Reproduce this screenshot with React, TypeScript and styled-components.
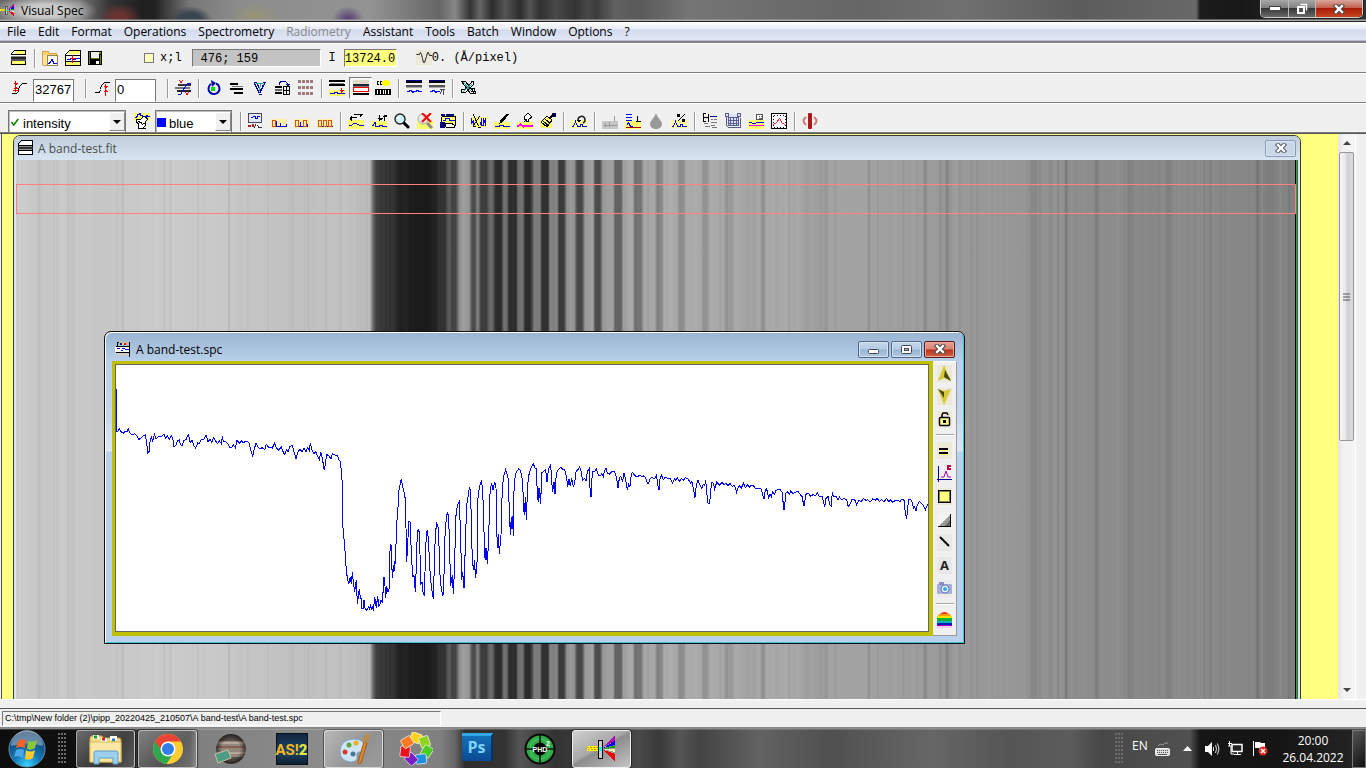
import React from 'react';
import styled, { createGlobalStyle, css } from 'styled-components';

const Global = createGlobalStyle`
  *, *::before, *::after { box-sizing: border-box; }
  html, body { margin: 0; padding: 0; }
  body { background: #f0f0f0; font-family: "Open Sans", "Noto Sans", sans-serif; font-size: 12px; color: #000; overflow: hidden; }
  button, input, select { font: inherit; color: inherit; margin: 0; }
  svg { display: block; flex: none; }
`;

/* ---------- shared icon primitives ---------- */

const PALE = '#ffff6c';

type LineProps = { d: string; c?: string; w?: number };
const Line = ({ d, c = '#000', w = 1 }: LineProps) => (
  <path d={d} fill="none" stroke={c} strokeWidth={w} transform="translate(.5 .5)" />
);
type BoxProps = { x: number; y: number; w: number; h: number; c?: string };
const Box = ({ x, y, w, h, c = '#000' }: BoxProps) => <rect x={x} y={y} width={w} height={h} fill={c} />;
const Tint = ({ x = 0, y = 9, w = 16, h = 7 }: { x?: number; y?: number; w?: number; h?: number }) => (
  <Box x={x} y={y} w={w} h={h} c={PALE} />
);
const Wave = ({ c = '#00f', y = 12 }: { c?: string; y?: number }) => (
  <Line c={c} d={`M0 ${y + 1}h2v-1h1v-2h2v-1h1v2h2v2h2v-1h2v-1h1v1h2`} />
);

const glyphs: Record<string, React.ReactNode> = {
  film: (<>
    <path d="M4 0h11v4H0V3z" fill="#fff" /><Box x={4} y={1} w={10} h={3} c={PALE} />
    <Line d="M3 0h11v14M3 0l-3 3v2M0 4h14M0 9v5h14" />
    <Box x={0} y={5} w={15} h={1} c="#fff" /><Box x={0} y={6} w={15} h={1} c="#888" /><Box x={0} y={7} w={15} h={2} c="#222" />
    <Box x={0} y={9} w={15} h={2} c="#555" /><Box x={1} y={11} w={13} h={3} c={PALE} />
  </>),
  fitFile: (<>
    <path d="M4 1h10v4H1V4z" fill="#fff" /><Line d="M3 0h11v14h-14v-11zM0 5h14" />
    <Box x={1} y={6} w={13} h={1} c="#888" /><Box x={0} y={7} w={15} h={2} c="#333" /><Box x={1} y={9} w={13} h={1} c="#999" /><Box x={1} y={10} w={13} h={1} /><Box x={1} y={11} w={13} h={3} c="#fff" />
  </>),
  folder: (<>
    <path d="M0 3l1-2h5l1 2h7v12H1z" fill="#f6cf73" stroke="#d6a03c" strokeWidth="1" />
    <Box x={1} y={5} w={4} h={10} c="#fae3a0" />
    <Box x={5} y={6} w={11} h={10} c="#fff" /><Line c="#9a8448" d="M5 5h10v10h-10z" />
    <Line c="#00f" d="M6 13l2-1l1-3h1l1 4h3" />
  </>),
  openSpectrum: (<>
    <Box x={1} y={0} w={14} h={15} c="#fff" /><Box x={3} y={1} w={12} h={3} c={PALE} />
    <Box x={1} y={11} w={14} h={4} c={PALE} />
    <Line d="M4 0h11v15h-15v-11zM0 5h15M0 11h15" /><Line c="#00f" d="M1 9h4v-1h3v1h2v-1h4" /><Line c="#f00" d="M7 4v8M5 8h5" />
  </>),
  save: (<>
    <Box x={0} y={1} w={14} h={14} /><Box x={3} y={2} w={8} h={6} c="#f0f0f0" /><Box x={11} y={2} w={2} h={2} c="#8a8a20" />
    <Box x={1} y={2} w={1} h={12} c="#7c7c00" /><Box x={12} y={5} w={1} h={9} c="#7c7c00" /><Box x={3} y={8} w={8} h={1} c="#7c7c00" /><Box x={8} y={11} w={3} h={3} c="#fff" />
  </>),
  dispersion: (<>
    <Box x={0} y={0} w={16} h={15} c="#ece9d8" /><g shapeRendering="auto"><Line c="#222" d="M0 4h3l1-2l1 2l1 4l1 4h1l2-6l1-4h1l1 3h3" /></g>
  </>),
  high: (<>
    <Line d="M0 13h5l2-2v-3l2-3l2-2h5" /><Line c="#f00" d="M4 0v11M2 3h4M3 4h2M2 8h4M3 7h2M1 10h6" />
  </>),
  low: (<>
    <Line d="M0 12h5l1-3l1-4l3-3h5" /><Line c="#f00" d="M11 3v12M9 6h4M10 7h2M9 11h4M10 10h2" />
  </>),
  threshold: (<>
    <Box x={3} y={4} w={13} h={2} c="#333" /><Box x={0} y={7} w={15} h={2} c="#777" /><Box x={2} y={10} w={14} h={2} c="#222" />
    <Line c="#00f" d="M2 14h3l2-3l2-4l3-4h4" /><Line c="#f00" d="M4 0l3 3M7 0l-3 3M10 12l3 3M13 12l-3 3" />
  </>),
  rotate: (<>
    <g shapeRendering="auto"><path d="M10 3.500a5.500 5.500 0 1 1-5 .5" fill="none" stroke="#0000b0" strokeWidth="2" /><path d="M5 0l5 3-4 4z" fill="#0000b0" /></g>
    <Box x={5} y={7} w={4} h={4} c="#00e000" />
  </>),
  lines: (<><Box x={1} y={3} w={8} h={2} /><Box x={3} y={6} w={11} h={1} c="#777" /><Box x={1} y={8} w={13} h={2} /><Box x={5} y={12} w={9} h={2} /></>),
  vee: (<><Line c="#0000a0" d="M1 2h3M10 2h3M2 3l5 10M12 3l-5 10M5 4l3 6" /><Line c="#2b9a9a" d="M3 3h7l2 2M8 3l-1 8" /><Line c="#0000a0" d="M6 14h3M10 4v2" /></>),
  copyPanels: (<>
    <Line c="#0000a0" d="M4 4v-2l2-1h4l2 2v1M10 4h4M11 5h2" />
    <Box x={0} y={6} w={7} h={2} /><Box x={0} y={9} w={7} h={2} c="#666" /><Box x={0} y={12} w={7} h={2} />
    <Line d="M8 6h6v8h-6zM8 10h6M11 6v8" />
  </>),
  grid: (<>{[0, 6, 12].map(y => [0, 4, 8, 12].map(x => <Box key={`${x}-${y}`} x={x} y={y} w={3} h={3} c="#a07a78" />))}</>),
  stripDown: (<>
    <Box x={0} y={0} w={16} h={2} /><Box x={1} y={2} w={14} h={1} c="#fff" /><Box x={1} y={3} w={14} h={1} c="#888" /><Box x={0} y={4} w={16} h={2} />
    <Tint y={10} h={6} /><Line c="#00f" d="M0 13h5v-1h3v1h7" /><Line c="#f00" d="M12 7v6M10 10h4M11 11h2" />
  </>),
  zone: (<>
    <Box x={0} y={0} w={16} h={4} c="#ded9c8" /><Box x={0} y={4} w={16} h={2} c="#223" /><Box x={0} y={6} w={16} h={1} c="#777" />
    <Box x={0} y={7} w={16} h={5} c="#f00" /><Box x={1} y={8} w={14} h={3} c="#fff" /><Box x={0} y={13} w={16} h={2} />
  </>),
  lamp: (<>
    <ellipse cx="11" cy="3" rx="4" ry="3" fill="#ff0" /><Line d="M3 1h-1v3h1M6 1h-1v3h1" />
    <Box x={0} y={9} w={16} h={6} />{[2, 5, 8, 10, 13].map(x => <Box key={x} x={x} y={10} w={1} h={4} c="#fff" />)}
  </>),
  strip: (<><Box x={0} y={0} w={16} h={3} /><Box x={0} y={0} w={16} h={1} c="#000080" /><Box x={0} y={5} w={16} h={2} c="#555" /><Box x={0} y={7} w={16} h={1} c="#aaa" /><Line c="#00f" d="M0 11h3v-1h2v1h1v1h1v-1h3v-1h2v1h4" /></>),
  stripX: (<><Box x={0} y={0} w={16} h={3} /><Box x={0} y={0} w={16} h={1} c="#000080" /><Box x={0} y={5} w={16} h={2} c="#555" /><Box x={0} y={7} w={16} h={1} c="#aaa" /><Line c="#00f" d="M0 11h3v-1h2v1h1v1h1v-1h3" /><Line c="#446" d="M10 9h5M11 14l1-5M14 9v5" /></>),
  plug: (<>
    <Line d="M0 1h5l8 10h2v2h-5L1 1M5 1l9 12M10 1h3v3l-8 8h-4v-3h3l8-8M1 12h4" /><Line c="#2aa" d="M3 2l8 9M12 3l-9 8" /><Line d="M9 8h5v3h-4" />
  </>),
  pen: (<>
    <Tint y={0} h={8} /><Wave y={3} /><path d="M2 6h5l3-3 4 3-3 3 1 3-4 4-4-1 1-4-3-2z" fill="#fff" stroke="#000" /><Line d="M4 8l4 2M8 11l3-2M8 15l3 0" />
  </>),
  board: (<>
    <Box x={1} y={1} w={13} h={9} c="#e4e8f8" /><Line c="#446" d="M0 0h13v9h-13z" /><Line c="#00f" d="M2 4h2l1-1h2v2h2v-2h2" />
    <Line c="#334" d="M7 10v2M5 15l2-3M9 12l2 3M10 14h3" /><Box x={0} y={12} w={3} h={2} c="#a22" /><Box x={4} y={11} w={2} h={3} c="#a22" />
  </>),
  peak1: (<><Box x={0} y={6} w={16} h={9} c="#fbf0a4" /><Line c="#00f" d="M1 13h4v-6M5 13h4v-4M9 13h6v-3" /><Line c="#d4501a" d="M1 7h3v6h-3z" /></>),
  peak2: (<><Box x={0} y={6} w={16} h={9} c="#fbf0a4" /><Line c="#00f" d="M1 13h5v-5M5 13h8v-3" /><Line c="#d4501a" d="M1 7h3v6h-3zM9 7h3v6h-3z" /></>),
  peak3: (<><Box x={0} y={6} w={16} h={9} c="#fbf0a4" /><Line c="#00f" d="M1 13h15" /><Line c="#d4501a" d="M1 7h3v6h-3zM6 7h3v6h-3zM11 7h3v6h-3z" /></>),
  shiftX: (<><Tint y={7} h={9} /><Line d="M1 4h7M2 3v3M3 2v5M5 1h9M12 0v3M13 0v2" /><Line c="#00f" d="M0 12h3l2-2h3l3 2h5" /></>),
  shiftY: (<><Tint y={8} h={8} /><Line d="M8 1v6M6 5h5M7 6h3M13 1v6M11 3h4M12 2h3" /><Line c="#00f" d="M0 12h2l1-3h1v4h4v-1h3v1h5" /></>),
  magnify: (<><g shapeRendering="auto"><path d="M9 9l5 5" stroke="#000" strokeWidth="3" strokeLinecap="round" /><circle cx="6" cy="6" r="5" fill="#cdf4f6" stroke="#222" strokeWidth="1.400" /></g><Box x={4} y={4} w={2} h={2} c="#fff" /></>),
  zoomOff: (<><Tint y={8} h={8} /><g shapeRendering="auto"><circle cx="6" cy="6" r="5" fill="#e7e7e7" stroke="#aaa" /><path d="M10 10l5 5" stroke="#888" strokeWidth="3" /><path d="M5 0l9 9M14 0l-9 9" stroke="#f00" strokeWidth="2" /></g></>),
  diskWave: (<><Box x={1} y={2} w={14} h={11} c={PALE} /><Line d="M1 3h14v9h-4M1 3v6" /><Box x={1} y={1} w={4} h={2} c="#000080" /><Box x={6} y={1} w={8} h={2} c="#000080" /><Line c="#00f" d="M2 7h3v-2h4v2h5" /><Box x={0} y={9} w={5} h={6} c="#000080" /><path d="M5 10h6l3 2v2H6z" fill="#fff" stroke="#000" /></>),
  cutWave: (<><Tint y={4} h={10} /><Line c="#00f" d="M0 4v6l2-3v5M9 12l1-7v7h2v-8M12 11l2-6v7" /><Line d="M2 1l5 12M8 3l-6 9M1 13h3M6 14h3" /></>),
  brush: (<><Tint /><Line c="#00f" d="M0 13h5v-1h4v1h6" /><path d="M5 11l2-5 5-5h3l-6 8z" /></>),
  pin: (<><Tint /><Line c="#f0f" w={2} d="M0 13l3-2l3 2l4-1h6" /><path d="M8 3l3-3 4 4-3 2-1 3-4-3z" fill="#fff" stroke="#000" /><Line d="M9 6l-3 3" /></>),
  sweep: (<><Tint x={0} y={7} w={12} h={8} /><path d="M1 9l6-6 5 4-5 7z" fill="#ff6" stroke="#000" /><Line d="M3 8l5 4M5 6l5 4M6 13l1-2" /><Box x={12} y={0} w={4} h={4} c="#000060" /><Line w={2} d="M9 5l4-4" /></>),
  undo: (<><Box x={0} y={7} w={16} h={8} c="#ffff98" /><Line c="#00f" d="M0 13h2l2-5l2 5h3v-2h2v2h5" /><g shapeRendering="auto"><path d="M7 7a3.500 3.500 0 1 1 5 3" fill="none" stroke="#222" strokeWidth="1.500" /></g><Line d="M5 7h4M6 8h2" /></>),
  greyStrip: (<><Box x={0} y={8} w={16} h={8} c="#c6c6c6" /><Line c="#999" d="M1 12h13M12 2v5M11 3h1M3 9v4M7 8v5" /></>),
  orderOne: (<><Tint y={8} h={8} /><Line c="#00f" d="M0 1h6M0 4h6M0 7h6M1 12l2-3l2 4h2" /><Line c="#a00" d="M0 14h15" /><Line d="M12 2v6M11 3h1M10 8h5" /></>),
  drop: (<path shapeRendering="auto" d="M8 0C7 4 2 8 2 11c0 3 3 5 6 5s6-2 6-5C14 8 9 4 8 0z" fill="#999" />),
  percent: (<><Box x={0} y={7} w={16} h={8} c="#ffff98" /><Line c="#00f" d="M0 13h2l2-5l2 5h3v-2h2v2h5" /><Line d="M6 8l7-7" /><Box x={6} y={1} w={3} h={3} /><Box x={11} y={6} w={3} h={3} /></>),
  header: (<><Line d="M1 0v8M6 0v8M1 4h5M0 0h3M0 8h3" /><Line c="#0000a0" d="M7 3h7" /><Line c="#777" d="M8 6h2M11 6h3M8 9h6M8 12h4M1 10h4M2 13h5M9 14h5" /></>),
  table: (<><Box x={1} y={1} w={14} h={12} c="#dfe2ff" /><Line c="#55608c" d="M0 0h3v3h-3zM12 0h3v3h-3zM1 3v9l2 2h12v-10M3 4h10v8h-10zM3 7h10M3 10h10M5 4v8M8 4v8M11 4v8" /></>),
  printWave: (<><Tint y={7} h={9} /><Box x={9} y={1} w={6} h={6} c="#fff" /><Line c="#555" d="M8 1h6v5h-6zM10 3h1M12 3h1M10 5h3" /><Line c="#00f" d="M0 9h3l1 1h3l1-1h7" /><Line c="#f0f" d="M0 12h15" /></>),
  graph: (<><Box x={0} y={0} w={16} h={16} c="#fff" /><Line d="M0 0h15v15h-15zM3 1v1M6 1v1M9 1v1M12 1v1M3 13v2M6 13v2M9 13v2M12 13v2M1 3h1M1 6h1M1 9h1M1 12h1M13 3h2M13 6h2M13 9h2M13 12h2" /><Line c="#f33" d="M2 11l3-2l3-4l3 5l3 1" /></>),
  gate: (<><g shapeRendering="auto"><rect x="6" y="0" width="4" height="16" rx="1" fill="#b01818" /><path d="M4 4Q-1 8 4 12" fill="none" stroke="#c77" strokeWidth="2" /><path d="M12 4Q17 8 12 12" fill="none" stroke="#c77" strokeWidth="2" /></g></>),
  check: (<g shapeRendering="auto"><path d="M2 8l3 4 6-8" fill="none" stroke="#008000" strokeWidth="2" /></g>),
};

const Glyph = ({ name, size = 16 }: { name: string; size?: number }) => (
  <svg width={size} height={size} viewBox="0 0 16 16" shapeRendering="crispEdges" aria-hidden="true">{glyphs[name]}</svg>
);

const Prism = ({ size }: { size: number }) => (
  <svg width={size} height={size} viewBox="0 0 32 32" shapeRendering="crispEdges" aria-hidden="true">
    <rect x="1" y="13" width="11" height="5" fill="#ff0" /><path d="M1 14h11M2 16h10" stroke="#e08a20" strokeDasharray="2 1" />
    <path d="M17 14L29 3v5z" fill="#b000b0" /><path d="M17 15L29 8v4z" fill="#00f" /><path d="M17 16l12-4v3z" fill="#00a000" /><path d="M17 16h12v3z" fill="#fff8b0" /><path d="M17 17l12 4v7z" fill="#e00" />
    <rect x="12.500" y="7.500" width="4" height="18" fill="#ccc" stroke="#000" /><rect x="13" y="14" width="3" height="4" fill="#0ff" />
  </svg>
);

/* ---------- application frame ---------- */

const Screen = styled.div`display: flex; flex-direction: column; height: 100vh; min-height: 600px;`;

const TitleBar = styled.header`
  display: flex; height: 22px; flex: none; border-bottom: 1px solid #222; padding: 0 3px 0 0;
  background:
    linear-gradient(#0000 19px, #aaa 20px, #aaa 21px),
    radial-gradient(ellipse 54px 16px at 44px 11px, #ffffffa0 40%, #fff0),
    radial-gradient(ellipse 22px 14px at 120px 17px, #7c3434c0 30%, #7c343400),
    radial-gradient(ellipse 22px 14px at 190px 20px, #3b4550 50%, #3b455000),
    radial-gradient(ellipse 24px 12px at 255px 16px, #a39a6290, #a39a6200),
    radial-gradient(ellipse 16px 14px at 348px 20px, #4c3270c0 20%, #4c327000),
    linear-gradient(90deg, #666 0, #777 80px, #333 110px, #202020 140px, #222 155px, #777 190px, #8c8c8c 240px, #939393 370px, #666 440px, #888 455px, #333 470px, #666 480px, #2c2c2c 492px, #555 505px, #2c2c2c 520px, #555 530px, #303030 540px, #494949 556px, #333 575px, #484848 588px, #3c3c3c 596px, #606060 615px, #5a5a5a 640px, #757575 690px, #6c6c6c 780px, #666 860px, #707070 960px, #5c5c5c 1080px, #686868 1196px, #1c1c1c 1200px, #181818 1240px, #333 1366px);
`;
const AppTitle = styled.h1`
  display: flex; align-items: center; gap: 6px; margin: 0; flex: 1; height: 21px;
  font-size: 12px; font-weight: 400;
`;
const CaptionGroup = styled.div`
  display: flex; height: 18px; border: 1px solid #ccc; border-top: 0; border-radius: 0 0 5px 5px; overflow: hidden; box-shadow: 0 0 0 1px #222;
`;
const CaptionButton = styled.button<{ $close?: boolean }>`
  display: grid; place-items: center; padding: 0; border: 0; border-left: 1px solid #bbb;
  width: ${p => (p.$close ? 47 : 27)}px;
  background: ${p => (p.$close
    ? 'linear-gradient(#d9a79d, #c4614e 45%, #a81c06 50%, #c8451f)'
    : 'linear-gradient(#a8a8a8, #808080 45%, #363636 50%, #6a6a6a)')};
  &:first-child { border-left: 0; }
`;

const MenuBar = styled.nav`
  display: flex; height: 21px; flex: none; padding-left: 1px; border-bottom: 2px solid #848484; box-shadow: inset 0 -1px #b6bccc;
  background: linear-gradient(#fff 0, #e8ebf5 7px, #d4dbed 8px, #e0e6f5 18px);
`;
const MenuItem = styled.button<{ $dim?: boolean }>`
  border: 0; background: none; padding: 0 6px; height: 19px; line-height: 19px; white-space: nowrap;
  color: ${p => (p.$dim ? '#888' : '#000')};
`;

const ToolRow = styled.div<{ $low?: boolean }>`
  display: flex; align-items: center; height: 30px; flex: none; padding: ${p => (p.$low ? '6px 8px 0' : '0 8px')};
  border-top: 1px solid #fff; border-bottom: 1px solid #7d7d7d;
`;
const ToolButton = styled.button<{ $on?: boolean }>`
  display: flex; align-items: center; width: 23px; height: 22px; padding: 0 0 0 3px; flex: none; border: 0; background: none;
  ${p => p.$on && css`border: 1px solid; border-color: #777 #fff #fff #777; background: #f8f8f8;`}
`;
const Separator = styled.span`
  width: 8px; height: 19px; flex: none; padding-left: 3px;
  &::before { content: ''; display: block; height: 100%; width: 2px; background: #9a9a9a; border-right: 1px solid #fff; }
`;
const Spacer = styled.span<{ $w: number }>`width: ${p => p.$w}px; flex: none;`;

const sunken = css`border: 1px solid; border-color: #777 #fff #fff #777; border-radius: 0; outline: 0;`;
const MonoField = styled.input<{ $yellow?: boolean }>`
  ${sunken}
  width: ${p => (p.$yellow ? 53 : 129)}px; height: 18px; padding: 1px ${p => (p.$yellow ? 0 : 8)}px 0;
  font-family: "Liberation Mono", monospace; font-size: 12px;
  background: ${p => (p.$yellow ? '#ffff80' : '#c3c3c3')};
`;
const MonoLabel = styled.label`
  display: flex; align-items: center; gap: 6px; font-family: "Liberation Mono", monospace; font-size: 12px; white-space: pre;
`;
const Tick = styled.input`
  appearance: none; width: 10px; height: 10px; border: 1px solid #777; background: #ffffc4; border-radius: 0;
`;
const NumberField = styled.input`
  ${sunken}
  align-self: flex-end; width: 41px; height: 23px; padding: 0 1px 2px; background: #fff; font-family: "Liberation Sans", Arial, sans-serif; font-size: 13px;
  border-color: #777 #777 #fff #777;
`;
const Combo = styled.label<{ $w: number }>`
  display: flex; align-items: center; width: ${p => p.$w}px; height: 22px; align-self: flex-end; padding-left: 1px;
  background: #fff; border: 1px solid #777; border-bottom: 0; box-shadow: inset 1px 1px #bbb;
  select { flex: 1; min-width: 0; width: 0; height: 20px; appearance: none; border: 0; background: none; padding: 3px 2px 0 1px; outline: 0; font-family: "Liberation Sans", Arial, sans-serif; font-size: 13px; }
`;
const Drop = styled.span`
  display: grid; place-items: center; width: 16px; height: 19px; background: #f0f0f0; border: 1px solid; border-color: #fff #888 #888 #fff;
  &::before { content: ''; border: 4px solid transparent; border-top-color: #000; border-bottom: 0; }
`;
const Swatch = styled.span`width: 9px; height: 9px; margin: 2px 2px 0 0; background: #00f; flex: none;`;

/* ---------- workspace ---------- */

const Workspace = styled.main`display: flex; flex: 1; min-height: 0; border-top: 1px solid #555; padding: 0 10px 0 1px; border-bottom: 1px solid #fff;`;
const Canvas = styled.section`position: relative; flex: 1; overflow: hidden; background: #ffff80; border-left: 1px solid #555;`;
const ScrollBar = styled.div`
  display: flex; flex-direction: column; align-items: center; width: 18px; padding: 0 1px; background: linear-gradient(90deg, #e4e4e4, #f2f2f2 30%, #f4f4f4); border-right: 1px solid #fff;
`;
const ScrollArrow = styled.button<{ $down?: boolean }>`
  width: 16px; height: 18px; padding: 0; border: 0; background: none; display: grid; place-items: center;
  &::before { content: ''; border: 4px solid transparent; ${p => (p.$down ? 'border-top-color: #444; border-bottom: 0;' : 'border-bottom-color: #444; border-top: 0;')} }
`;
const ScrollThumb = styled.div`
  display: grid; place-items: center; width: 15px; flex: 289 0 0; border: 1px solid #989898; border-radius: 2px; background: linear-gradient(90deg, #f6f6f6, #e6e6e8 48%, #cfcfd3 52%, #dcdce0);
`;
const ScrollRest = styled.div`flex: 241 0 0;`;

const FitWindow = styled.article`
  position: absolute; left: 11px; right: 37px; top: 1px; bottom: -8px; display: flex; flex-direction: column;
  border: 1px solid #3a3a3a; border-radius: 7px 7px 0 0; background: #d7e5f2; padding: 0 0 0 2px;
`;
const FitCaption = styled.header`
  display: flex; align-items: center; justify-content: space-between; height: 24px; flex: none; margin-left: -2px; padding: 0 4px; color: #4c4c4c;
  background: linear-gradient(#bfcddb, #d7e5f2); border-radius: 6px 6px 0 0;
`;
const WindowName = styled.h2`display: flex; align-items: center; gap: 4px; margin: 0; font-size: 12px; font-weight: 400;`;
const FrameButton = styled.button<{ $tone?: 'red' | 'pale' }>`
  display: grid; place-items: center; width: 31px; height: 17px; padding: 0; border-radius: 2px;
  border: 1px solid ${p => (p.$tone === 'red' ? '#5a1a20' : p.$tone === 'pale' ? '#8a9bb5' : '#52668c')};
  box-shadow: inset 0 0 0 1px ${p => (p.$tone === 'red' ? '#e9a99d' : '#d6e4f2')};
  background: ${p => (p.$tone === 'red'
    ? 'linear-gradient(#e3a197, #d98274 48%, #b8321a 52%, #cf6448)'
    : p.$tone === 'pale' ? '#c9d7e6' : 'linear-gradient(#c3d6ea, #b6cce3 48%, #96b3d0 52%, #b2cbe4)')};
`;
const ImageArea = styled.div`
  position: relative; flex: 1; min-height: 0; margin-right: 2px; border-right: 1px solid #008080;
  box-shadow: inset -1px 0 #808000, inset -2px 0 #000;
  svg { width: calc(100% - 2px); height: 100%; }
`;
const Selection = styled.div`position: absolute; left: 0; right: 1px; top: 24px; height: 30px; border: 1px solid #ff8080;`;

const SpcWindow = styled.article`
  position: absolute; left: 102px; top: 197px; width: 861px; height: 313px; display: flex; flex-direction: column;
  padding: 0 7px; border: 1px solid #111; border-radius: 7px 7px 0 0;
  background: linear-gradient(#99b4d1, #b9d1ea 30px, #c4d8ee 85px, #dbe8f5 119px, #b9d1ea 120px);
  box-shadow: inset 1px 1px #fff, inset -1px -1px #3bc6d8;
`;
const SpcCaption = styled.header`display: flex; align-items: center; height: 29px; flex: none; padding: 5px 2px 0;`;
const FrameButtons = styled.div`display: flex; gap: 2px; margin-left: auto;`;
const SpcBody = styled.div`display: flex; flex: 1; min-height: 0; margin-bottom: 7px;`;
const Plot = styled.div`
  flex: 1; min-width: 0; border: 3px solid #c0c000; border-right-width: 4px; border-bottom-width: 4px;
  svg { width: 100%; height: 100%; background: #fff; border: 1px solid #666; }
`;
const SideBar = styled.div`
  display: flex; flex-direction: column; align-items: center; width: 24px; background: #f0f0f0; border-right: 1px solid #999; border-bottom: 1px solid #999; border-top: 1px solid #fff;
`;
const SideButton = styled.button`display: flex; align-items: center; width: 23px; height: 23px; padding: 0 0 0 4px; border: 0; background: none;`;
const SideRule = styled.span`
  width: 18px; height: 8px; padding-top: 3px;
  &::before { content: ''; display: block; height: 2px; background: #aaa; border-bottom: 1px solid #fff; }
`;

const StatusBar = styled.footer`height: 28px; flex: none; padding-top: 8px; background: #f0f0f0;`;
const StatusInner = styled.div`border-top: 1px solid #555; border-bottom: 1px solid #888; height: 20px; padding: 2px 0 0 2px;`;
const StatusText = styled.div`
  ${sunken}
  width: 439px; height: 15px; padding-left: 2px; line-height: 13px; white-space: nowrap; font-family: "Liberation Sans", Arial, sans-serif; font-size: 9px;
`;

/* ---------- taskbar ---------- */

const TaskBar = styled.footer`
  display: flex; align-items: center; height: 40px; flex: none; color: #fff; border-top: 1px solid #8c8c8c;
  box-shadow: inset 0 1px #ffffff30;
  background: linear-gradient(90deg, #0d0d0d 0, #111 75px, #333 135px, #505050 190px, #808080 200px, #8c8c8c 320px, #808080 440px, #666 455px, #2e2e2e 465px, #333 505px, #555 520px, #333 555px, #484848 640px, #3a3a3a 660px, #555 680px, #444 700px, #626262 760px, #505050 830px, #666 930px, #555 1010px, #5c5c5c 1070px, #484848 1100px, #505050 1190px, #161616 1200px, #151515 1280px, #262626 1366px);
`;
const StartButton = styled.button`display: grid; place-items: center; width: 54px; padding: 0; border: 0; background: none;`;
const Grip = styled.span<{ $m: string }>`
  width: 9px; height: 32px; margin: ${p => p.$m}; flex: none;
  background: radial-gradient(circle at 1px 1px, #6c6c6c 1px, #0000 1px) 0 0 / 3px 4px;
`;
const TaskButton = styled.button<{ $run?: boolean; $front?: boolean }>`
  display: grid; place-items: center; width: 59px; height: 38px; margin-right: 3px; padding: 0; border: 1px solid transparent; border-radius: 3px; background: none;
  ${p => p.$run && css`border-color: #ffffff90; background: linear-gradient(130deg, #ffffff60, #ffffff18 60%, #ffffff30); box-shadow: 0 0 0 1px #0006;`}
  ${p => p.$front && css`background: linear-gradient(150deg, #d0d0d0, #a8a8a8 45%, #8c8c8c 50%, #c4c4c4); border-color: #eee;`}
`;
const Tray = styled.div`display: flex; align-items: center; margin-left: auto; height: 38px;`;
const Language = styled.button`border: 0; background: none; padding: 0 0 6px; width: 22px; height: 32px; text-align: left; line-height: 22px;`;
const TrayButton = styled.button<{ $w: number }>`display: grid; place-items: center; width: ${p => p.$w}px; padding: 0; border: 0; background: none;`;
const Clock = styled.time`width: 76px; margin-left: 7px; text-align: center; line-height: 17px; white-space: pre-line;`;
const ShowDesktop = styled.button`width: 14px; height: 38px; margin-left: 1px; padding: 0; border: 1px solid #777; background: linear-gradient(135deg, #555, #111);`;

/* ---------- drawings ---------- */

/* Grey level of the recorded strip at each horizontal position. */
const bands: [number, number][] = [
  [17, 206], [40, 198], [66, 202], [68, 192], [72, 200], [110, 198], [150, 203], [220, 200], [300, 192], [345, 194], [370, 184], [373, 110], [376, 65], [382, 52],
  [394, 50], [398, 34], [408, 27], [427, 27], [436, 35], [440, 50], [445, 48], [448, 92], [450, 92], [452, 65], [456, 68],
  [459, 145], [464, 158], [469, 148], [472, 82], [475, 74], [477, 124], [479, 112], [481, 60], [487, 62], [490, 112], [493, 104], [495, 44], [501, 42],
  [504, 114], [507, 106], [509, 46], [516, 42], [518, 110], [523, 116], [525, 46], [531, 42], [534, 122], [540, 124], [542, 50], [548, 48], [550, 132],
  [557, 138], [559, 60], [564, 60], [567, 145], [574, 154], [577, 74], [582, 68], [585, 150], [593, 162], [595, 82], [600, 76], [603, 152], [613, 164],
  [615, 98], [621, 94], [623, 155], [633, 172], [635, 110], [641, 118], [643, 165], [655, 170], [657, 128], [662, 134], [664, 172], [677, 173],
  [679, 142], [684, 142], [686, 170], [701, 168], [703, 145], [707, 148], [710, 170], [724, 168], [726, 152], [732, 156], [736, 170], [745, 162], [760, 168],
  [762, 140], [764, 142], [766, 168], [800, 166], [806, 154], [812, 162], [820, 154], [830, 163], [867, 162], [869, 140], [871, 160], [923, 156], [925, 134], [928, 156],
  [944, 152], [947, 128], [950, 154], [1025, 150], [1035, 138], [1041, 146], [1064, 144], [1066, 118], [1068, 142], [1094, 140], [1096, 122], [1100, 140],
  [1126, 140], [1129, 126], [1133, 138], [1164, 136], [1168, 126], [1175, 138], [1199, 138], [1255, 134], [1258, 110], [1261, 132], [1271, 124], [1279, 132], [1295, 128],
];

const grain = Array.from({ length: 300 }, (_, i) => {
  const a = Math.sin(i * 12.9898) * 43758.5453;
  const b = Math.sin(i * 78.233) * 12543.123;
  return { x: 17 + Math.floor((a - Math.floor(a)) * 1278), light: i % 2 === 0, o: 0.01 + (b - Math.floor(b)) * 0.03 };
});

const StripImage = () => (
  <svg viewBox="16 0 1279 540" preserveAspectRatio="none" role="img" aria-label="Spectrum strip">
    <defs>
      <linearGradient id="strip" gradientUnits="userSpaceOnUse" x1="17" y1="0" x2="1295" y2="0">
        {bands.map(([x, g]) => <stop key={x} offset={(x - 17) / 1278} stopColor={`rgb(${g},${g},${g})`} />)}
      </linearGradient>
    </defs>
    <rect x="16" y="0" width="1279" height="540" fill="url(#strip)" />
    {grain.map((g, i) => <rect key={i} x={g.x} y="0" width={1 + (i % 3)} height="540" fill={g.light ? '#fff' : '#000'} opacity={g.o} />)}
  </svg>
);

/* Intensity profile, three units per screen pixel. */
const profileLeft = '49,192 49,318 54,318 58,310 63,320 70,325 76,318 82,320 85,308 88,322 96,330 104,326 110,332 116,344 124,338 130,332 136,330 140,352 143,384 147,380 150,352 154,336 158,348 163,328 168,342 175,335 185,334 192,328 196,340 202,332 208,342 214,332 218,338 222,366 228,360 232,348 238,344 241,358 246,362 252,346 258,344 262,334 266,330 270,352 276,346 282,362 287,370 293,354 298,356 304,342 311,344 318,330 324,350 330,344 336,352 340,338 346,346 352,356 358,348 364,356 367,334 370,350 377,350 384,356 388,366 394,368 400,360 406,368 411,346 418,354 424,348 430,354 438,348 448,354 452,376 458,394 463,372 468,354 474,366 480,372 486,368 494,374 499,358 505,366 511,366 517,370 523,354 530,370 536,376 544,366 550,382 554,388 560,374 564,382 569,364 577,362 582,380 588,402 594,380 600,374 606,380 612,370 618,380 623,368 628,376 631,354 635,372 642,386 647,380 652,392 658,404 662,380 667,400 673,436 677,410 680,388 688,394 693,402 697,386 704,390 712,390 716,404 721,410 724,440 727,478 728,598 731,632 734,660 738,724 742,760 746,778 751,755 754,776 757,740 760,772 764,800 769,766 772,836 778,792 781,818 785,822 786,852 790,850 792,824 795,850 800,856 806,844 809,852 812,842 815,852 818,846 820,858 824,816 829,848 833,812 836,842 840,838 843,826 847,830 850,790 852,756 855,784 857,820 860,784 864,800 868,790 868,690 873,658 877,760 880,720 882,740 884,712 887,718 889,604 893,568 896,502 901,474 904,462 907,478 912,502 916,522 918,610 920,710 924,640 925,590 930,590 933,660 936,720 939,755 942,752 946,802 949,720 952,620 955,614 958,622 961,720 962,778 966,772 969,800 973,814 975,740 979,622 983,618 986,660 991,756 995,790 1000,822 1003,720 1006,626 1010,596 1015,608 1018,690 1021,780 1024,786 1028,814 1031,800 1034,650 1038,590 1042,562 1046,575 1049,680 1052,782 1057,750 1060,808 1064,720 1067,580 1072,540 1078,530 1082,640 1085,764 1088,742 1092,790 1096,660 1100,540 1105,510 1108,486 1112,500 1115,650 1118,716 1121,734 1123,706 1127,760 1132,700 1134,520 1138,486 1144,470 1148,490 1152,620 1154,692 1156,705 1158,668 1162,718 1166,640 1169,520 1172,485 1175,476 1179,494 1184,470 1188,490 1190,620 1193,668 1195,628 1198,688 1203,630 1206,520 1210,456 1217,434 1222,450 1225,465 1228,560 1231,630 1234,575 1236,612 1238,574 1240,632 1242,500 1246,446 1256,432 1262,436 1265,458 1268,460 1270,540 1273,570 1276,516 1279,584 1283,480 1286,452 1294,426 1300,416 1306,432 1309,430 1312,510 1315,530 1317,488 1322,538';
const profileRight = '2,538 5,444 10,440 17,434 21,470 25,434 31,422 34,440 37,500 40,490 42,470 45,508 48,460 52,436 58,432 63,426 68,434 74,432 80,460 83,486 87,462 91,484 95,460 100,484 104,474 108,440 114,434 119,426 123,438 128,466 134,460 138,468 142,440 148,430 150,490 153,516 157,440 163,440 169,432 175,450 181,452 186,446 190,454 194,436 198,430 202,444 208,448 215,440 224,440 230,460 234,488 238,460 242,454 248,468 252,444 257,464 262,496 266,478 270,485 274,446 278,442 284,452 292,455 300,450 306,456 312,452 318,462 324,478 330,462 336,456 344,462 350,450 353,480 357,496 360,462 365,450 370,464 376,456 384,460 390,460 398,474 404,462 408,466 412,458 418,470 424,460 430,466 436,458 442,460 448,468 452,476 456,470 460,490 465,518 469,480 474,466 478,476 485,490 490,478 494,482 497,466 500,500 504,534 509,534 513,490 516,472 520,474 524,492 530,472 538,480 546,472 552,478 558,476 564,482 570,476 576,484 584,482 590,502 594,488 600,482 604,490 610,474 616,488 622,480 628,486 634,480 640,482 646,490 656,490 664,492 668,510 672,522 676,496 680,492 686,518 690,506 694,514 698,500 704,508 708,496 714,494 720,492 726,502 732,556 738,504 744,500 748,508 752,498 760,506 766,502 774,498 780,508 786,514 792,544 798,508 804,504 812,514 820,508 826,512 832,504 838,514 846,514 850,528 854,546 858,520 864,514 870,540 874,544 877,500 880,516 888,514 894,526 898,516 904,524 912,520 920,524 924,544 930,538 936,522 944,524 950,540 956,526 964,530 970,520 978,526 984,524 990,532 998,522 1006,526 1012,520 1018,530 1024,524 1032,530 1040,520 1046,530 1052,524 1058,532 1066,526 1074,526 1080,530 1086,522 1092,526 1095,556 1100,582 1103,550 1106,524 1112,524 1118,534 1120,550 1124,546 1128,558 1132,540 1138,530 1144,534 1150,542 1156,554 1160,544 1164,538';

const ProfileChart = () => (
  <svg viewBox="48 120 2436 798" preserveAspectRatio="none" shapeRendering="crispEdges" role="img" aria-label="Intensity profile">
    <g fill="none" stroke="#00f" strokeWidth="3">
      <polyline points={profileLeft} />
      <polyline points={profileRight} transform="translate(1320 0)" />
    </g>
  </svg>
);

const Cross = ({ size = 12, edge = '#444' }: { size?: number; edge?: string }) => (
  <svg width={size} height={size - 2} viewBox="0 0 12 10" aria-hidden="true">
    <path d="M3 2l6 6M9 2l-6 6" stroke={edge} strokeWidth="4.400" strokeLinecap="square" /><path d="M3 2l6 6M9 2l-6 6" stroke="#fff" strokeWidth="2.400" strokeLinecap="square" />
  </svg>
);

const sideGlyphs: Record<string, React.ReactNode> = {
  'Scale up': (<><rect width="15" height="17" fill="#ece9d8" /><path d="M7 0l7 16-7-3-6 3z" fill="#d6c936" /><path d="M8 5l6 11-7-4z" fill="#4a4508" /></>),
  'Scale down': (<><rect width="15" height="17" fill="#ece9d8" /><path d="M1 1l6 2 7-2-7 16z" fill="#d6c936" /><path d="M1 1l6 3v6z" fill="#4a4508" /></>),
  Unlock: (<><rect width="15" height="17" fill="#ece9d8" /><path d="M5 7V4l1-2h4l1 2" fill="none" stroke="#000" strokeWidth="1.500" /><rect x="2.500" y="6.500" width="10" height="8" rx="1" fill="#ffff80" stroke="#000" strokeWidth="1.500" /><rect x="6" y="9" width="3" height="3" /></>),
  Equal: (<><rect width="15" height="17" fill="#ece9d8" /><path d="M3 8.500h9M3 12.500h9" stroke="#ffff80" /><path d="M2 7h9M2 11h9" stroke="#000" strokeWidth="2" /></>),
  Curve: (<><path d="M1.500 1v16M0 14.500h15" stroke="#000090" /><path d="M4 12h3l2-6 2 6h3" fill="none" stroke="#a0a" /><path d="M14 1h-3v3h3" fill="none" stroke="#c00040" strokeWidth="2" /></>),
  Frame: (<><rect width="15" height="17" fill="#ece9d8" /><rect x="1.500" y="2.500" width="12" height="12" fill="#ffff80" stroke="#000" strokeWidth="1" /><rect x="2.500" y="3.500" width="10" height="10" fill="none" stroke="#000" strokeDasharray="1 1" /></>),
  Gradient: (<><rect x="1" y="3" width="13" height="12" fill="#f4f4f4" /><path d="M14 3v12H2z" fill="#999" /><path d="M14 8v7H8z" fill="#666" /><path d="M1 15.500h13M13.500 3v12" stroke="#000" /></>),
  Line: (<><rect width="15" height="17" fill="#e8e8e8" /><path d="M3 3l9 9" stroke="#000" strokeWidth="2" /></>),
  Camera: (<><rect width="15" height="17" fill="#ececec" /><rect x="0" y="4" width="15" height="10" rx="1" fill="#a9b0d8" /><rect x="2" y="2" width="5" height="3" fill="#8990c0" /><circle cx="8" cy="9" r="4" fill="#e8f4ff" stroke="#6878b8" /><circle cx="8" cy="9" r="2" fill="#30a8e8" /></>),
  Rainbow: (<><path d="M3 3q4-4 9 0l1 3H1z" fill="#f33000" /><path d="M2 3h11l1 2H1z" fill="#f8a000" /><rect y="5" width="15" height="3" fill="#e8e800" /><rect y="7" width="15" height="3" fill="#10b030" /><rect y="10" width="15" height="2" fill="#18b0c0" /><rect y="12" width="15" height="2" fill="#0020b0" /><rect y="14" width="15" height="1" fill="#a000c0" /><rect y="15" width="15" height="2" fill="#f8c8f8" /></>),
};
const LetterIcon = styled.span`width: 15px; height: 17px; background: #e8e8e8; font: 700 13px/17px "Open Sans", sans-serif; text-align: center; color: #222;`;

const SideTool = ({ name }: { name: string }) => (
  <SideButton aria-label={name}>
    <svg width="15" height="17" viewBox="0 0 15 17" aria-hidden="true">{sideGlyphs[name]}</svg>
  </SideButton>
);

const Orb = () => (
  <svg width="38" height="38" viewBox="0 0 38 38" aria-hidden="true">
    <defs>
      <radialGradient id="orb" cx=".5" cy=".95" r=".9"><stop offset="0" stopColor="#35d6ff" /><stop offset=".4" stopColor="#1479b8" /><stop offset="1" stopColor="#123a66" /></radialGradient>
    </defs>
    <circle cx="19" cy="19" r="18" fill="url(#orb)" stroke="#5f8fae" /><path d="M3 16a16 16 0 0 1 32 0q-16-5-32 0z" fill="#fff" opacity=".35" />
    <path d="M10 11q4-3 8-1l-1 8q-4-2-9 0z" fill="#f0622a" /><path d="M20 11q4 2 9-1l-2 8q-4 3-8 1z" fill="#8cc63a" /><path d="M8 20q5-2 8 0l-1 8q-4-3-9-1z" fill="#4ba8e6" /><path d="M18 20q4 3 9 0l-2 8q-4 3-8 1z" fill="#ffca2c" />
  </svg>
);

const ExplorerIcon = () => (
  <svg width="34" height="32" viewBox="0 0 34 32" aria-hidden="true">
    <path d="M1 5q0-2 2-2h10l2 2h15q2 0 2 2v22H1z" fill="#f7dc86" stroke="#c49b3a" /><path d="M4 4h6M12 7h6M21 5h7" stroke="#fff" strokeWidth="4" /><path d="M5 4h3" stroke="#00a020" strokeWidth="3" /><path d="M13 6h3" stroke="#d02020" strokeWidth="3" /><path d="M23 7h3" stroke="#2b7bd0" strokeWidth="3" />
    <path d="M1 9h31v20H1z" fill="#fbe8a4" stroke="#d9b75a" /><path d="M5 31V20q0-2 2-2h20q2 0 2 2v11h-5v-6H10v6z" fill="#9bd0ee" stroke="#5a9cc8" />
  </svg>
);
const ChromeIcon = () => (
  <svg width="32" height="32" viewBox="0 0 32 32" aria-hidden="true">
    <circle cx="16" cy="16" r="15" fill="#fc3" /><path d="M3 8.500a15 15 0 0 0 11.500 22.400L21.500 20 16 16z" fill="#2fa84f" /><path d="M3 8.500A15 15 0 0 1 29 8.500H16a7.500 7.500 0 0 0-7 8z" fill="#ea4335" />
    <circle cx="16" cy="16" r="7.500" fill="#fff" /><circle cx="16" cy="16" r="6" fill="#2f7de9" />
  </svg>
);
const PlanetIcon = () => (
  <svg width="32" height="32" viewBox="0 0 32 32" aria-hidden="true">
    <defs>
      <clipPath id="planet"><circle cx="17" cy="16" r="15" /></clipPath>
      <radialGradient id="shade"><stop offset=".6" stopColor="#000" stopOpacity="0" /><stop offset="1" stopColor="#000" stopOpacity=".6" /></radialGradient>
    </defs>
    <g clipPath="url(#planet)"><rect width="32" height="32" fill="#94867c" /><path d="M0 4h32M0 28h32" stroke="#5a524e" strokeWidth="8" /><path d="M0 10h32M0 20h32" stroke="#b6a79a" strokeWidth="2" /><path d="M0 14h32" stroke="#846052" strokeWidth="2" /><circle cx="17" cy="16" r="15" fill="url(#shade)" /></g>
    <path d="M1 21l13-4 3 8-13 5z" fill="#4f9c86" stroke="#c9c39a" />
  </svg>
);
const AsIcon = styled.span`
  display: flex; justify-content: center; width: 32px; height: 32px; border: 1px solid #0a0f18; background: linear-gradient(#10263f, #1d4668 60%, #0d1f33);
  font: 700 15px/32px "Roboto", sans-serif; color: #f5b721;
  b { color: #dfe83a; }
`;
const PaintIcon = () => (
  <svg width="34" height="34" viewBox="0 0 34 34" aria-hidden="true">
    <path d="M3 20Q3 8 16 7q12 0 12 9 0 4-5 4-4 0-3 4 1 6-6 6Q3 29 3 20z" fill="#cfe4f5" stroke="#7ea6c8" /><circle cx="8" cy="20" r="2.500" fill="#d83a2a" /><circle cx="12" cy="13" r="2.500" fill="#58a838" /><circle cx="19" cy="11" r="2.500" fill="#f0b020" /><circle cx="16" cy="22" r="2.500" fill="#4a7898" />
    <path d="M27 10l3 1-6 20q-3 2-3-1z" fill="#e8862a" stroke="#9c5a1c" /><path d="M26 10q-1-7 6-9 2 5-2 10z" fill="#b98a52" />
  </svg>
);
const petals = ['#ffd21f', '#8fd21f', '#4fc81f', '#1f8fe0', '#7a1fc8', '#e8141c', '#ff7a1f'];
const FlowerIcon = () => (
  <svg width="34" height="34" viewBox="0 0 32 32" aria-hidden="true">
    {petals.map((c, i) => <rect key={c} x="11" y="1" width="10" height="9" rx="1" fill={c} stroke="#fff" strokeWidth=".6" transform={`rotate(${Math.round((i * 360) / 7)} 16 16) rotate(20 16 5)`} />)}
  </svg>
);
const PsIcon = styled.span`
  width: 31px; height: 28px; background: linear-gradient(#1470b8, #0b4a90); border-top: 3px solid #2fa8e8; border-right: 2px solid #073468; color: #7fd3ff; font: 700 16px/22px "Open Sans", sans-serif; text-align: center; margin-bottom: 3px;
`;
const PhdIcon = () => (
  <svg width="32" height="32" viewBox="0 0 32 32" aria-hidden="true">
    <circle cx="16" cy="16" r="14.500" fill="#2faa48" stroke="#0a0a0a" strokeWidth="2" /><circle cx="16" cy="16" r="10" fill="none" stroke="#56c866" /><path d="M16 1v30M1 16h30" stroke="#111" strokeWidth="1.500" /><circle cx="16" cy="16" r="6.500" fill="#000" />
    <text x="16" y="19" textAnchor="middle" fontFamily="Liberation Sans" fontWeight="700" fontSize="7" fill="#fff">PHD</text><text x="24" y="13" textAnchor="middle" fontFamily="Liberation Sans" fontWeight="700" fontSize="7" fill="#fff">2</text>
  </svg>
);

const menus = ['File', 'Edit', 'Format', 'Operations', 'Spectrometry', 'Radiometry', 'Assistant', 'Tools', 'Batch', 'Window', 'Options', '?'];
const rowThreeTools = ['board', 'peak1', 'peak2', 'peak3', '|', 'shiftX', 'shiftY', 'magnify', 'zoomOff', 'diskWave', '|', 'cutWave', 'brush', 'pin', 'sweep', '|', 'undo', '|', 'greyStrip', 'orderOne', 'drop', 'percent', '|', 'header', 'table', 'printWave', 'graph', '|', 'gate'];
const rowTwoTools = ['threshold', '|', 'rotate', 'lines', 'vee', 'copyPanels', 'grid', '|', 'stripDown', 'zone', 'lamp', '|', 'strip', 'stripX', '|', 'plug'];

const Tools = ({ names }: { names: string[] }) => (
  <>{names.map((n, i) => (n === '|' ? <Separator key={i} /> : <ToolButton key={n} $on={n === 'zone'} aria-label={n}><Glyph name={n} /></ToolButton>))}</>
);

export default function App() {
  return (
    <Screen>
      <Global />

      <TitleBar>
        <AppTitle><Prism size={15} />Visual Spec</AppTitle>
        <CaptionGroup>
          <CaptionButton aria-label="Minimize"><svg width="12" height="5"><rect x=".5" y=".5" width="11" height="4" fill="#fff" stroke="#444" /></svg></CaptionButton>
          <CaptionButton aria-label="Restore"><svg width="12" height="12"><path d="M4.500 1.500h6v6" fill="none" stroke="#fff" strokeWidth="1.500" /><rect x="2" y="4" width="6" height="6" fill="#555" stroke="#fff" strokeWidth="2" /></svg></CaptionButton>
          <CaptionButton $close aria-label="Close"><Cross /></CaptionButton>
        </CaptionGroup>
      </TitleBar>

      <MenuBar>{menus.map(m => <MenuItem key={m} $dim={m === 'Radiometry'} disabled={m === 'Radiometry'}>{m}</MenuItem>)}</MenuBar>

      <ToolRow>
        <Tools names={['film', '|', 'folder', 'openSpectrum', 'save']} />
        <Spacer $w={36} />
        <MonoLabel><Tick type="checkbox" />x;l</MonoLabel>
        <Spacer $w={10} />
        <MonoField aria-label="Cursor position" readOnly value="476; 159" />
        <Spacer $w={8} />
        <MonoLabel htmlFor="intensity-value">I</MonoLabel>
        <Spacer $w={8} />
        <MonoField $yellow id="intensity-value" readOnly value="13724.0" />
        <Spacer $w={19} />
        <Glyph name="dispersion" />
        <MonoLabel as="span">0. (Å/pixel)</MonoLabel>
      </ToolRow>

      <ToolRow>
        <Tools names={['high']} /><Spacer $w={2} />
        <NumberField aria-label="High threshold" defaultValue="32767" />
        <Spacer $w={8} /><Separator /><Spacer $w={1} />
        <Tools names={['low']} /><Spacer $w={1} />
        <NumberField aria-label="Low threshold" defaultValue="0" />
        <Spacer $w={8} /><Separator />
        <Tools names={rowTwoTools} />
      </ToolRow>

      <ToolRow $low>
        <Combo $w={118}><Glyph name="check" size={12} /><select aria-label="Series"><option>intensity</option></select><Drop /></Combo>
        <Spacer $w={5} /><Tools names={['pen']} /><Spacer $w={1} />
        <Combo $w={77}><Swatch /><select aria-label="Colour"><option>blue</option></select><Drop /></Combo>
        <Spacer $w={5} /><Separator />
        <Tools names={rowThreeTools} />
      </ToolRow>

      <Workspace>
        <Canvas>
          <FitWindow>
            <FitCaption>
              <WindowName><Glyph name="fitFile" />A band-test.fit</WindowName>
              <FrameButton $tone="pale" aria-label="Close image"><Cross edge="#556" /></FrameButton>
            </FitCaption>
            <ImageArea><StripImage /><Selection /></ImageArea>
          </FitWindow>

          <SpcWindow>
            <SpcCaption>
              <WindowName>
                <svg width="18" height="16" viewBox="-1 0 18 16" shapeRendering="crispEdges" aria-hidden="true">
                  <Box x={3} y={0} w={11} h={4} c="#bbb" /><Line d="M2 4v-3h1M14 0v15M0 5h14M0 11h14" /><Box x={5} y={2} w={2} h={2} c="#00f" /><Box x={7} y={2} w={2} h={2} c="#ff0" /><Box x={9} y={2} w={2} h={2} c="#f00" />
                  <Box x={0} y={6} w={14} h={5} c="#fff" /><Line c="#00f" d="M1 7h3M6 7h3M5 9h2M9 8h4" /><Box x={0} y={12} w={14} h={3} c="#ccc" />
                </svg>
                A band-test.spc
              </WindowName>
              <FrameButtons>
                <FrameButton aria-label="Minimize profile"><svg width="12" height="9"><rect x=".5" y="4.500" width="10" height="4" rx="1" fill="#fff" stroke="#445" /></svg></FrameButton>
                <FrameButton aria-label="Maximize profile"><svg width="11" height="9"><rect x=".5" y=".5" width="10" height="8" rx="1" fill="#fff" stroke="#445" /><rect x="3.500" y="3.500" width="4" height="2" fill="#a8c0dc" stroke="#445" /></svg></FrameButton>
                <FrameButton $tone="red" aria-label="Close profile"><Cross /></FrameButton>
              </FrameButtons>
            </SpcCaption>
            <SpcBody>
              <Plot><ProfileChart /></Plot>
              <SideBar>
                {['Scale up', 'Scale down', 'Unlock'].map(n => <SideTool key={n} name={n} />)}
                <SideRule />
                {['Equal', 'Curve', 'Frame', 'Gradient', 'Line'].map(n => <SideTool key={n} name={n} />)}
                <SideButton aria-label="Text"><LetterIcon>A</LetterIcon></SideButton>
                <SideTool name="Camera" />
                <SideRule />
                <SideTool name="Rainbow" />
              </SideBar>
            </SpcBody>
          </SpcWindow>
        </Canvas>
        <ScrollBar>
          <ScrollArrow aria-label="Scroll up" />
          <ScrollThumb><svg width="7" height="8"><path d="M0 1h7M0 4h7M0 7h7" stroke="#555" /></svg></ScrollThumb>
          <ScrollRest />
          <ScrollArrow $down aria-label="Scroll down" />
        </ScrollBar>
      </Workspace>

      <StatusBar><StatusInner><StatusText>C:\tmp\New folder (2)\pipp_20220425_210507\A band-test\A band-test.spc</StatusText></StatusInner></StatusBar>

      <TaskBar>
        <StartButton aria-label="Start"><Orb /></StartButton>
        <Grip $m="0 9px 0 4px" />
        <TaskButton $run aria-label="Explorer"><ExplorerIcon /></TaskButton>
        <TaskButton $run aria-label="Chrome"><ChromeIcon /></TaskButton>
        <TaskButton aria-label="Planetary capture"><PlanetIcon /></TaskButton>
        <TaskButton aria-label="AutoStakkert"><AsIcon>AS!<b>2</b></AsIcon></TaskButton>
        <TaskButton $run aria-label="Paint"><PaintIcon /></TaskButton>
        <TaskButton aria-label="Photo viewer"><FlowerIcon /></TaskButton>
        <TaskButton aria-label="Photoshop"><PsIcon>Ps</PsIcon></TaskButton>
        <TaskButton aria-label="PHD2"><PhdIcon /></TaskButton>
        <TaskButton $run $front aria-label="Visual Spec"><Prism size={32} /></TaskButton>
        <Tray>
          <Grip $m="0 8px 0 0" />
          <Language>EN</Language>
          <TrayButton $w={16} aria-label="Keyboard"><svg width="15" height="14"><rect x=".5" y="6.500" width="14" height="7" rx="1" fill="#ddd" stroke="#eee" /><path d="M2 8.500h11M2 10.500h11" stroke="#555" strokeDasharray="1 1" /><path d="M3 12.500h9" stroke="#555" /><path d="M3 4l2-2 3 1 2-2h3" fill="none" stroke="#999" /></svg></TrayButton>
          <TrayButton $w={34} aria-label="Show hidden icons"><svg width="9" height="5"><path d="M0 5l4.500-5L9 5z" fill="#fff" /></svg></TrayButton>
          <TrayButton $w={14} aria-label="Volume"><svg width="16" height="14"><path d="M1 4h3l4-4v14l-4-4H1z" fill="#fff" /><path d="M9.500 5v4M11.500 3q2 4 0 8M13.500 1.500q3 5.500 0 11" fill="none" stroke="#ddd" /></svg></TrayButton>
          <TrayButton $w={34} aria-label="Network"><svg width="16" height="15"><rect x="5" y="3.500" width="10" height="7" fill="#222" stroke="#fff" strokeWidth="1.500" /><path d="M7 13.500h7M10.500 11v3M1 2.500h4M2.500 0v5M1 5h3v8h3" fill="none" stroke="#fff" /></svg></TrayButton>
          <TrayButton $w={16} aria-label="Action center"><svg width="16" height="15"><path d="M1.500 0v15" stroke="#fff" /><path d="M3 1h5l1 1h4v6H8L7 7H3z" fill="#fff" /><circle cx="11" cy="10" r="4.500" fill="#e02a20" /><path d="M9 8l4 4M13 8l-4 4" stroke="#fff" strokeWidth="1.500" /></svg></TrayButton>
          <Clock>{'20:00\n26.04.2022'}</Clock>
          <ShowDesktop aria-label="Show desktop" />
        </Tray>
      </TaskBar>
    </Screen>
  );
}
